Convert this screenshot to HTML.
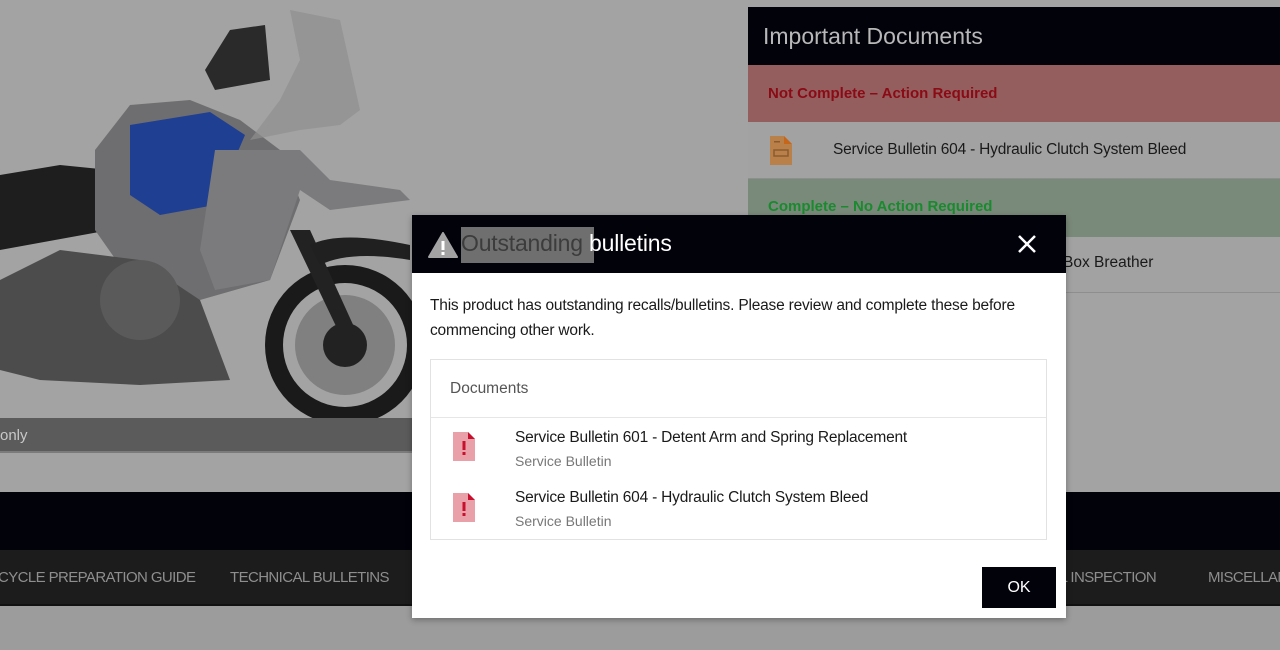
<!DOCTYPE html>
<html><head><meta charset="utf-8"><style>
*{margin:0;padding:0;box-sizing:border-box}
body{width:1280px;height:650px;overflow:hidden;background:#9c9c9c;font-family:"Liberation Sans",sans-serif;position:relative}
.abs{position:absolute}
.nav{color:#8e8e8e;font-size:15px;white-space:nowrap;letter-spacing:-0.6px}
</style></head><body>
<div class="abs" style="left:0;top:0;width:1280px;height:492px;background:#a3a3a3"></div>
<svg class="abs" style="left:0;top:0" width="420" height="460" viewBox="0 0 420 460">
<path d="M0 175 L60 165 L110 170 L110 230 L0 250Z" fill="#1e1e1e"/>
<path d="M95 150 L130 105 L190 100 L240 120 L280 150 L300 200 L270 280 L200 300 L130 280 L95 230Z" fill="#6e6e70"/>
<path d="M130 125 L210 112 L245 135 L215 205 L160 215 L130 195Z" fill="#1f3f92"/>
<path d="M215 150 L300 150 L330 180 L400 190 L410 200 L330 210 L300 190 L270 280 L215 290 L200 250Z" fill="#7b7b7d"/>
<path d="M250 140 L300 130 L340 125 L360 110 L340 20 L290 10 L300 60 L280 100Z" fill="#8f8f90" opacity=".7"/>
<path d="M230 30 L265 25 L270 80 L215 90 L205 70Z" fill="#2a2a2a"/>
<path d="M0 280 L60 250 L140 260 L200 300 L230 380 L140 385 L40 380 L0 370Z" fill="#4c4c4d"/>
<circle cx="140" cy="300" r="40" fill="#5a5a5b"/>
<circle cx="345" cy="345" r="80" fill="#1a1a1a"/>
<circle cx="345" cy="345" r="62" fill="#a3a3a3"/>
<circle cx="345" cy="345" r="50" fill="#777" opacity=".8"/>
<circle cx="345" cy="345" r="22" fill="#222"/>
<path d="M290 230 L310 230 L360 340 L345 345Z" fill="#222"/>
<path d="M310 245 Q340 230 410 245 L410 260 Q350 250 320 265Z" fill="#202020"/>
</svg>
<div class="abs" style="left:0;top:418px;width:412px;height:35px;background:#5b5b5b;border-bottom:2px solid #7b7b7b;color:#c8c8c8;font-size:15px;line-height:35px">only</div>
<div class="abs" style="left:748px;top:7px;width:532px;height:58px;background:#02020a;color:#b8b8b8;font-size:23px;line-height:58px;padding-left:15px">Important Documents</div>
<div class="abs" style="left:748px;top:65px;width:532px;height:57px;background:#955e5e;color:#8a0a15;font-size:15px;font-weight:bold;line-height:57px;padding-left:20px">Not Complete – Action Required</div>
<div class="abs" style="left:748px;top:122px;width:532px;height:57px;background:#a2a2a2;border-bottom:1px solid #8e8e8e"></div>
<svg class="abs" style="left:770px;top:136px" width="22" height="29"><path d="M0 0H14L22 8V29H0Z" fill="#b9804a"/><path d="M14 0L22 8H14Z" fill="#c6661a"/><rect x="4" y="14" width="14" height="6" fill="none" stroke="#8a5a2e" stroke-width="1.5"/><rect x="4" y="5" width="6" height="1.5" fill="#8a5a2e"/></svg>
<div class="abs" style="left:833px;top:141px;color:#1a1a1a;font-size:15.5px;letter-spacing:-0.2px">Service Bulletin 604 - Hydraulic Clutch System Bleed</div>
<div class="abs" style="left:748px;top:179px;width:532px;height:58px;background:#7a8a7a;color:#198a2e;font-size:15px;font-weight:bold;padding:19px 0 0 20px">Complete – No Action Required</div>
<div class="abs" style="left:748px;top:237px;width:532px;height:56px;background:#a2a2a2;border-bottom:1px solid #8e8e8e"></div>
<div class="abs" style="left:1063px;top:254px;color:#1a1a1a;font-size:15.5px">Box Breather</div>
<div class="abs" style="left:0;top:492px;width:1280px;height:58px;background:#02020a"></div>
<div class="abs" style="left:0;top:550px;width:1280px;height:56px;background:#1c1c1c;border-bottom:2px solid #111"></div>
<div class="abs nav" style="left:-2px;top:569px">CYCLE PREPARATION GUIDE</div>
<div class="abs nav" style="left:230px;top:569px">TECHNICAL BULLETINS</div>
<div class="abs nav" style="left:1040px;top:569px">NAL INSPECTION</div>
<div class="abs nav" style="left:1208px;top:569px">MISCELLANEOUS</div>
<div class="abs" style="left:412px;top:215px;width:654px;height:403px;background:#fff;box-shadow:0 2px 6px rgba(0,0,0,.3)">
 <div style="height:58px;background:#02020a;position:relative">
  <svg class="abs" style="left:16px;top:17px" width="30" height="26"><path d="M15 1L29 25H1Z" fill="#a3a3a3" stroke="#a3a3a3" stroke-linejoin="round" stroke-width="2"/><rect x="13.5" y="9" width="3" height="9" fill="#fff"/><rect x="13.5" y="20" width="3" height="3" fill="#fff"/></svg>
  <div class="abs" style="left:49px;top:12px;height:36px;width:133px;background:#6f6f6f"></div>
  <div class="abs" style="left:49px;top:15px;font-size:23px;white-space:nowrap;letter-spacing:-0.2px"><span style="color:#3c3c3c">Outstanding</span> <span style="color:#fff">bulletins</span></div>
  <svg class="abs" style="left:606px;top:20px" width="18" height="18"><path d="M1 1L17 17M17 1L1 17" stroke="#fff" stroke-width="2.5"/></svg>
 </div>
 <div style="padding:20px 18px 0 18px;font-size:15.5px;line-height:25px;color:#1a1a1a;letter-spacing:-0.2px">This product has outstanding recalls/bulletins. Please review and complete these before commencing other work.</div>
 <div class="abs" style="left:18px;top:144px;width:617px;height:181px;border:1px solid #e2e2e2">
  <div style="height:58px;border-bottom:1px solid #e6e6e6;color:#555;font-size:15.5px;padding:20px 0 0 19px">Documents</div>
  <svg class="abs" style="left:22px;top:72px" width="22" height="29"><path d="M0 0H15L22 7V29H0Z" fill="#e9a0a8"/><path d="M15 0L22 7H15Z" fill="#c8102e"/><rect x="9.5" y="9" width="3" height="9" fill="#c8102e"/><rect x="9.5" y="20" width="3" height="3" fill="#c8102e"/></svg>
  <div class="abs" style="left:84px;top:69px;font-size:15.5px;color:#1a1a1a;white-space:nowrap;letter-spacing:-0.2px">Service Bulletin 601 - Detent Arm and Spring Replacement</div>
  <div class="abs" style="left:84px;top:93px;font-size:14px;color:#777">Service Bulletin</div>
  <svg class="abs" style="left:22px;top:133px" width="22" height="29"><path d="M0 0H15L22 7V29H0Z" fill="#e9a0a8"/><path d="M15 0L22 7H15Z" fill="#c8102e"/><rect x="9.5" y="9" width="3" height="9" fill="#c8102e"/><rect x="9.5" y="20" width="3" height="3" fill="#c8102e"/></svg>
  <div class="abs" style="left:84px;top:129px;font-size:15.5px;color:#1a1a1a;white-space:nowrap;letter-spacing:-0.2px">Service Bulletin 604 - Hydraulic Clutch System Bleed</div>
  <div class="abs" style="left:84px;top:153px;font-size:14px;color:#777">Service Bulletin</div>
 </div>
 <div class="abs" style="left:570px;top:352px;width:74px;height:41px;background:#02020a;color:#fff;font-size:16px;text-align:center;line-height:41px">OK</div>
</div>
</body></html>
